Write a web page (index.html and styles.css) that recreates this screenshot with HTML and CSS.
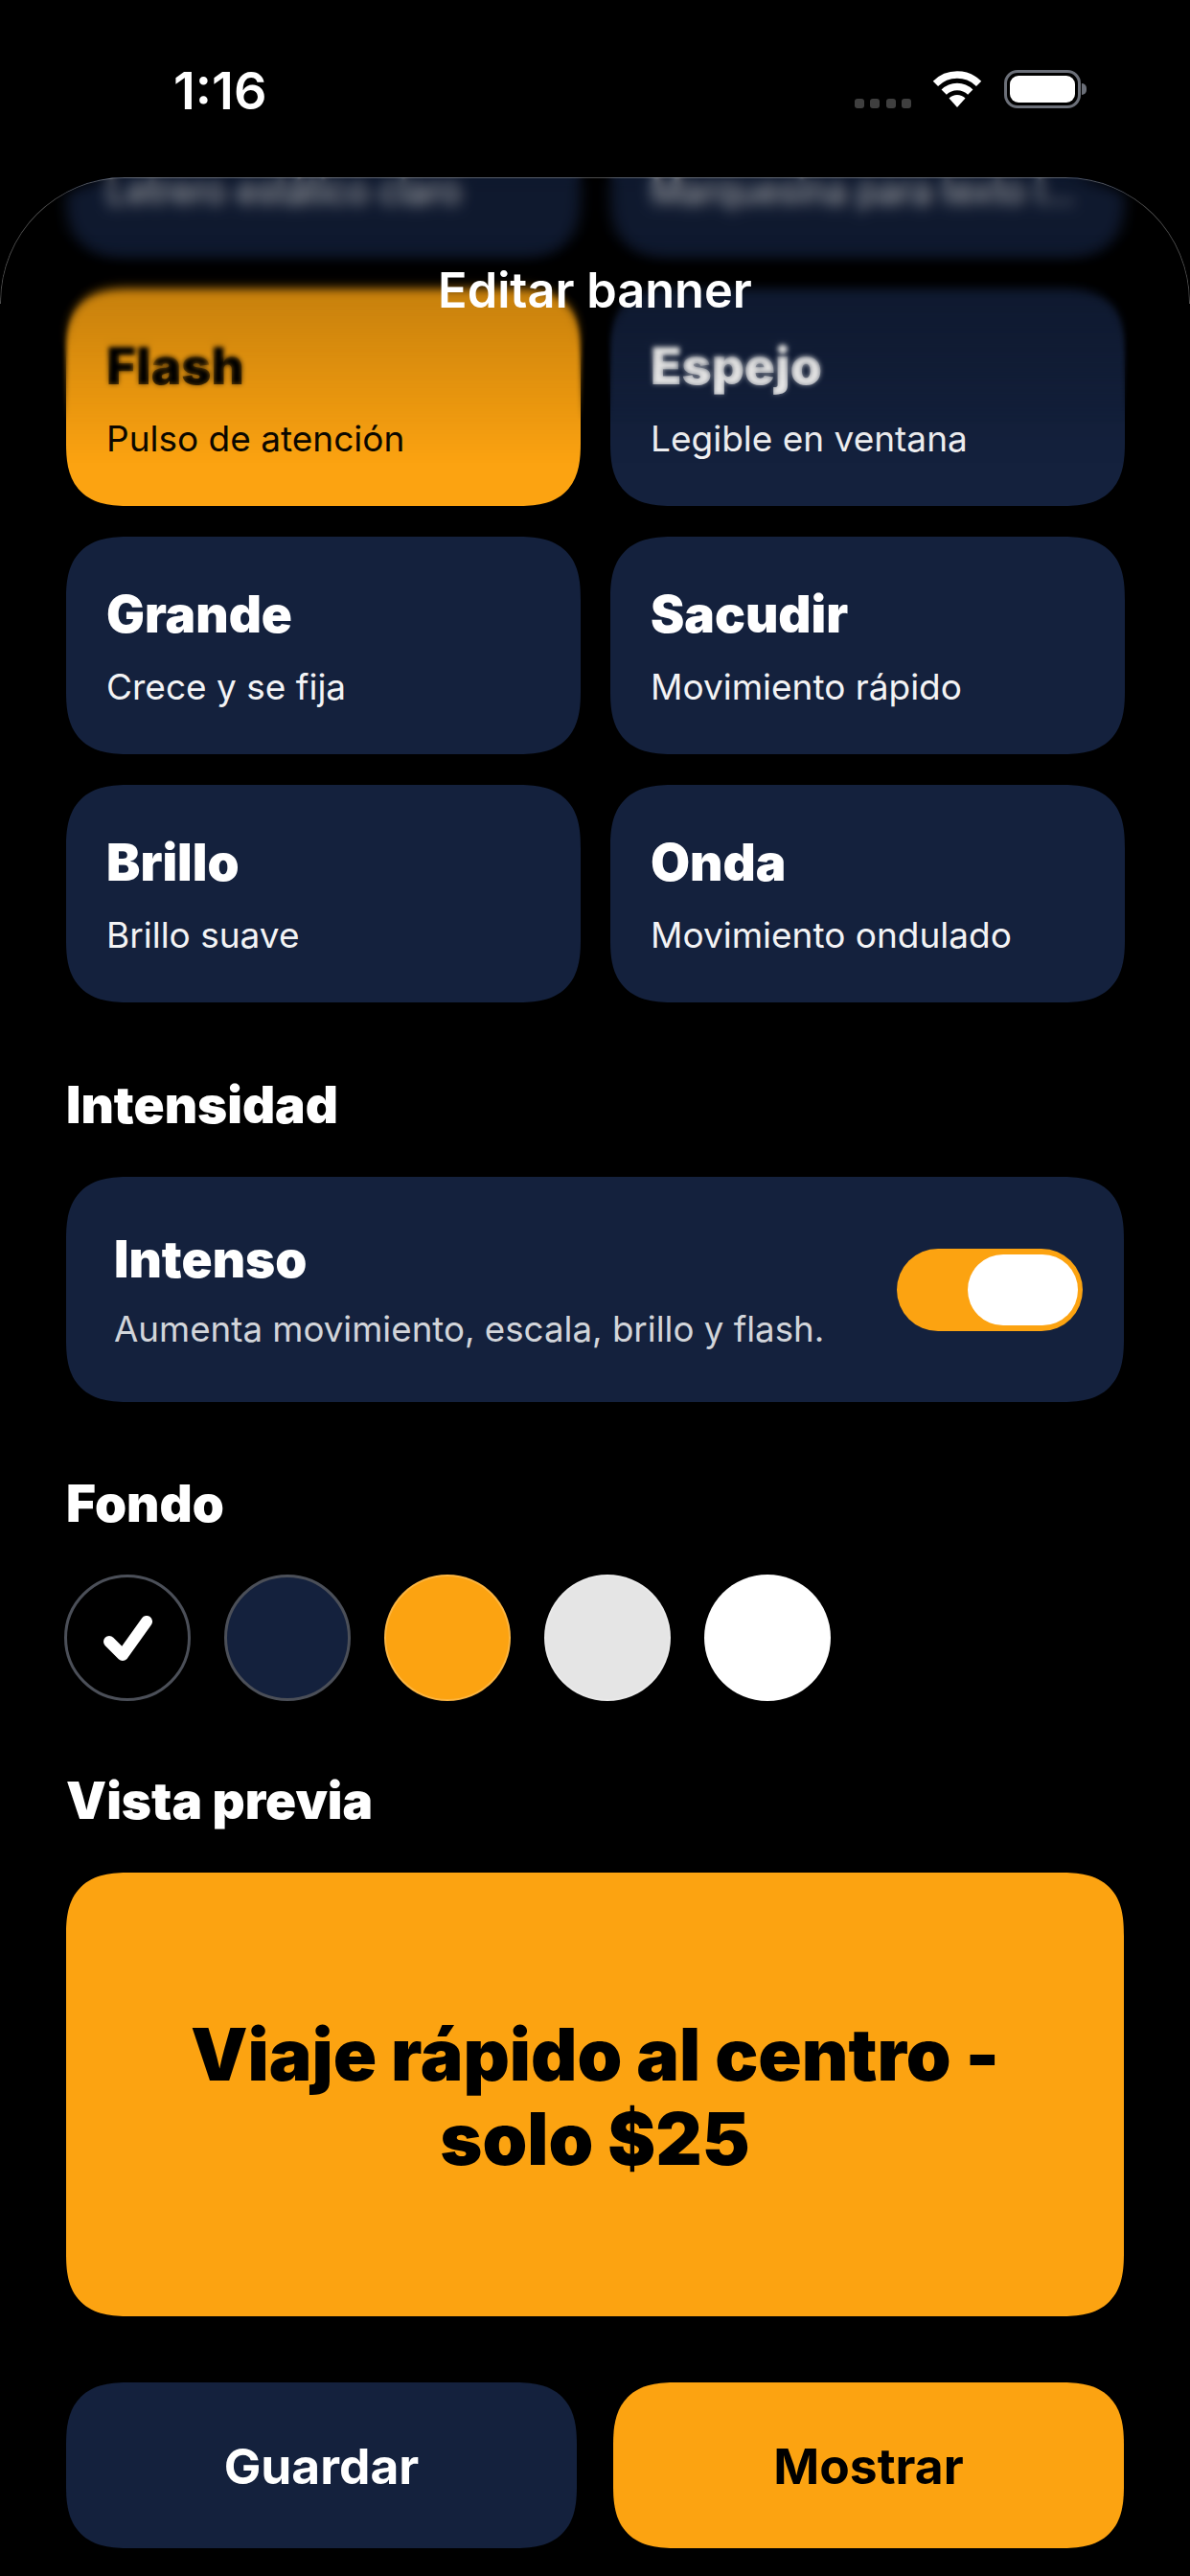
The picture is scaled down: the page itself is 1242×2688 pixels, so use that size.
FILE: index.html
```html
<!DOCTYPE html>
<html lang="es">
<head>
<meta charset="utf-8">
<title>Editar banner</title>
<link rel="stylesheet" href="styles.css">
</head>
<body>
<div class="screen">
  <header class="status">
    <span class="time">1:16</span>
    <div class="status-icons">
      <div class="signal"><i></i><i></i><i></i><i></i></div>
      <svg class="wifi" viewBox="0 0 52 38">
        <path class="wifi-arc" d="M3.4 13.4A32 32 0 0 1 48.6 13.4"/>
        <path class="wifi-arc" d="M12.2 22.2A19.5 19.5 0 0 1 39.8 22.2"/>
        <path class="wifi-dot" d="M26 38L17.5 28.6A12 12 0 0 1 34.5 28.6Z"/>
      </svg>
      <div class="battery"><div class="battery-fill"></div></div>
      <div class="battery-cap"></div>
    </div>
  </header>

  <main class="sheet">
    <div class="content">
      <section class="grid">
        <div class="card cut"><span class="sub">Letrero estático claro</span></div>
        <div class="card cut"><span class="sub">Marquesina para texto l...</span></div>
        <div class="card active"><span class="name">Flash</span><span class="sub">Pulso de atención</span></div>
        <div class="card"><span class="name">Espejo</span><span class="sub">Legible en ventana</span></div>
        <div class="card"><span class="name">Grande</span><span class="sub">Crece y se fija</span></div>
        <div class="card"><span class="name">Sacudir</span><span class="sub">Movimiento rápido</span></div>
        <div class="card"><span class="name">Brillo</span><span class="sub">Brillo suave</span></div>
        <div class="card"><span class="name">Onda</span><span class="sub">Movimiento ondulado</span></div>
      </section>

      <h2 class="heading h-intensity">Intensidad</h2>
      <section class="intense">
        <div class="intense-text">
          <span class="name">Intenso</span>
          <span class="intense-sub">Aumenta movimiento, escala, brillo y flash.</span>
        </div>
        <div class="toggle"><div class="knob"></div></div>
      </section>

      <h2 class="heading h-fondo">Fondo</h2>
      <section class="swatches">
        <div class="swatch black">
          <svg class="check" viewBox="0 0 51 47"><path d="M6 27L20 41L45 6"/></svg>
        </div>
        <div class="swatch navy"></div>
        <div class="swatch orange"></div>
        <div class="swatch light"></div>
        <div class="swatch white"></div>
      </section>

      <h2 class="heading h-vista">Vista previa</h2>
      <section class="preview"><p>Viaje rápido al centro -<br>solo $25</p></section>

      <section class="actions">
        <button class="btn save">Guardar</button>
        <button class="btn show">Mostrar</button>
      </section>
    </div>

    <div class="blur b1"></div>
    <div class="blur b2"></div>
    <div class="blur b3"></div>
    <div class="shade"></div>
    <div class="edge"></div>
    <h1 class="title">Editar banner</h1>
  </main>
</div>
</body>
</html>
```

FILE: styles.css
```css
* { box-sizing: border-box; }
html, body { margin: 0; padding: 0; background: #000; }
body { font-family: Inter, "Noto Sans", sans-serif; color: #fff; }
.screen { width: 1242px; height: 2688px; overflow: hidden; background: #000; }

.status { height: 185px; display: flex; justify-content: space-between; padding: 69px 108px 0 181px; }
.time { font-size: 54px; font-weight: 600; line-height: 52px; }
.status-icons { display: flex; align-items: flex-start; padding-top: 5px; }
.signal { display: flex; gap: 6.5px; margin-top: 29px; }
.signal i { width: 10px; height: 10px; border-radius: 3px; background: #3f3f3f; }
.wifi { width: 52px; height: 38px; margin-left: 22px; }
.wifi-arc { fill: none; stroke: #fff; stroke-width: 7.5; }
.wifi-dot { fill: #fff; }
.battery { width: 80px; height: 40px; margin-left: 23px; border: 3.5px solid #6b6f78; border-radius: 14px; padding: 3px; margin-top: -1px; }
.battery-fill { width: 100%; height: 100%; background: #fff; border-radius: 9px; }
.battery-cap { width: 5px; height: 12px; margin: 13px 0 0 1px; background: #6b6f78; border-radius: 0 6px 6px 0; }

.sheet { position: relative; height: 2503px; border-radius: 130px 130px 0 0; overflow: hidden; }
.content { margin-top: -143px; padding: 0 69px; }

.grid { display: grid; grid-template-columns: 537px 537px; gap: 32px 31px; }
.card { height: 227px; border-radius: 66px; corner-shape: superellipse(1.4); background: #14213d; padding: 50px 42px 0; display: flex; flex-direction: column; gap: 23px; }
.card.cut { padding-top: 136px; }
.card.active { background: #fca311; color: #000; }
.name { font-size: 53px; font-weight: 900; line-height: 62px; }
.sub { font-size: 37px; line-height: 44px; font-weight: 400; opacity: .95; }

.heading { margin: 0; font-size: 53px; font-weight: 900; line-height: 60px; }
.h-intensity { margin-top: 77px; }
.intense { margin-top: 45px; height: 235px; border-radius: 66px; corner-shape: superellipse(1.4); background: #14213d; display: flex; align-items: center; justify-content: space-between; padding: 0 43px 0 50px; }
.intense-text { display: flex; flex-direction: column; gap: 20px; }
.intense-sub { font-size: 36.7px; line-height: 44px; color: rgba(255,255,255,.82); }
.toggle { width: 194px; height: 86px; border-radius: 43px; background: #fca311; display: flex; align-items: center; justify-content: flex-end; padding-right: 5px; }
.knob { width: 115px; height: 74px; border-radius: 37px; background: #fff; }

.h-fondo { margin-top: 76px; }
.swatches { margin-top: 44px; margin-left: -2px; display: flex; gap: 35px; }
.swatch { width: 132px; height: 132px; border-radius: 50%; display: flex; align-items: center; justify-content: center; border: 2px solid rgba(255,255,255,.2); }
.swatch.black { background: #000; border: 3px solid #4b4f58; }
.swatch.navy { background: #14213d; border: 3px solid #4b4f58; }
.swatch.orange { background: #fca311; }
.swatch.light { background: #e5e5e5; }
.swatch.white { background: #fff; }
.check { width: 51px; height: 47px; }
.check path { fill: none; stroke: #fff; stroke-width: 12; stroke-linecap: round; stroke-linejoin: round; }

.h-vista { margin-top: 74px; }
.preview { margin-top: 45px; height: 463px; border-radius: 66px; corner-shape: superellipse(1.4); background: #fca311; display: flex; align-items: center; justify-content: center; }
.preview p { margin: 4px 0 0; color: #000; text-align: center; font-size: 75px; font-weight: 900; line-height: 88px; }

.actions { margin-top: 69px; display: grid; grid-template-columns: 533px 533px; justify-content: space-between; }
.btn { height: 173px; border: 0; border-radius: 66px; corner-shape: superellipse(1.4); font-family: inherit; font-size: 51.5px; font-weight: 700; }
.btn.save { background: #14213d; color: #fff; }
.btn.show { background: #fca311; color: #000; }

.blur { position: absolute; left: 0; right: 0; top: 0; height: 300px; pointer-events: none; }
.b1 { backdrop-filter: blur(2.5px); -webkit-mask-image: linear-gradient(#000 60%, transparent 85%); mask-image: linear-gradient(#000 60%, transparent 85%); }
.b2 { backdrop-filter: blur(4px); -webkit-mask-image: linear-gradient(#000 40%, transparent 60%); mask-image: linear-gradient(#000 40%, transparent 60%); }
.b3 { backdrop-filter: blur(6px); -webkit-mask-image: linear-gradient(#000 20%, transparent 42%); mask-image: linear-gradient(#000 20%, transparent 42%); }
.shade { position: absolute; left: 0; right: 0; top: 0; height: 300px; background: linear-gradient(rgba(0,0,0,.25), rgba(0,0,0,.2) 42%, rgba(0,0,0,0)); }
.edge { position: absolute; left: 0; right: 0; top: 0; height: 132px; border: 1.5px solid rgba(255,255,255,.3); border-bottom: 0; border-radius: 130px 130px 0 0; }
.title { position: absolute; left: 0; right: 0; top: 88px; margin: 0; text-align: center; font-size: 50.5px; line-height: 60px; font-weight: 600; }
```
